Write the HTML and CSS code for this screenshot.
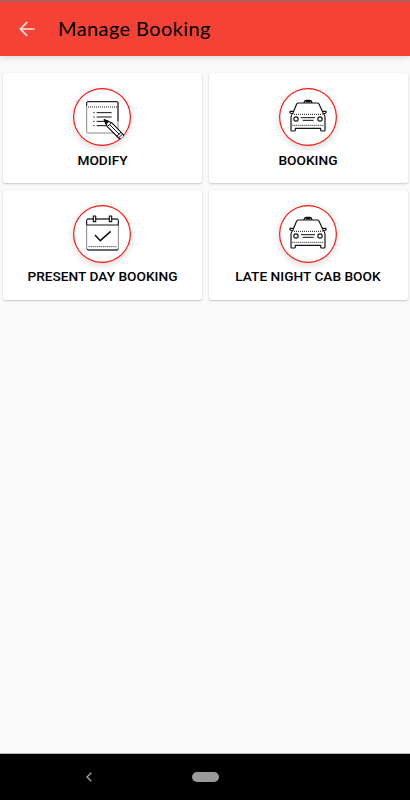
FILE: index.html
```html
<!DOCTYPE html>
<html lang="en">
<head>
<meta charset="utf-8">
<title>Manage Booking</title>
<link rel="stylesheet" href="styles.css">
</head>
<body>
<svg class="defs" width="0" height="0">
  <symbol id="car" viewBox="33 24 174 174">
    <path d="M75 98 86 72Q88 69 92 69H147Q151 69 153 72L165 98M108 68Q109 61 114 61H126Q131 61 132 68M113 65H128M77 94H66V99L75 102M163 94H174V99L165 102M76 99Q69 103 69 112V150Q69 153 72 153H79Q82 153 82 150V145H158V150Q158 153 161 153H168Q171 153 171 150V112Q171 103 164 99"/>
    <circle cx="84" cy="117" r="6.5"/><circle cx="156" cy="117" r="6.5"/>
    <path class="thin" d="M99 113H141M104 121H137"/>
    <path class="dots" d="M78 103H164M73 136H169"/>
  </symbol>
</svg>
<div class="screen">
  <header class="bar">
    <svg class="back" viewBox="0 0 16 16"><path d="M15.5 8H1.5M8.2 1.2 1.4 8l6.8 6.8"/></svg>
    <h1>Manage Booking</h1>
  </header>
  <main class="grid">
    <section class="card">
      <svg class="icon" viewBox="33 24 174 174">
        <rect class="gray" x="74" y="65" width="94" height="94" rx="3"/>
        <path class="edge" d="M74 77V68Q74 65 77 65H165Q168 65 168 68V124"/>
        <path class="dots" d="M78 81H167"/>
        <path class="thin" d="M104 98H149M104 111H149M104 124H133M104 137H138M94 98H98M94 111H98M94 124H98M94 137H98"/>
        <path class="fill" d="M127 119 149 128 184 164Q187 168 183 172L178 176Q174 178 170 174L136 140Z"/>
        <path class="edge" d="M137 139 149 128M142 133 172 163M164 169 177 157M169 174 182 162"/>
        <path class="tip" d="M127 119 139 124 132 132Z"/>
      </svg>
      <h2>MODIFY</h2>
    </section>
    <section class="card">
      <svg class="icon"><use href="#car"/></svg>
      <h2>BOOKING</h2>
    </section>
    <section class="card">
      <svg class="icon" viewBox="33 25 174 174">
        <rect class="gray" x="74" y="67" width="95" height="93" rx="4"/>
        <path class="edge" d="M74 85V71Q74 67 78 67H165Q169 67 169 71V85ZM75 156Q76 160 79 160H165Q168 160 169 156"/>
        <path class="fill" d="M94 58H101V75H94ZM142 58H149V75H142Z"/>
        <path class="check" d="M99 115 115 132 146 104"/>
        <path class="dots" d="M80 150H165"/>
      </svg>
      <h2>PRESENT DAY BOOKING</h2>
    </section>
    <section class="card">
      <svg class="icon"><use href="#car"/></svg>
      <h2>LATE NIGHT CAB BOOK</h2>
    </section>
  </main>
  <nav class="nav">
    <svg class="nav-back" viewBox="0 0 6 10"><path d="M5.3.7 1 5l4.3 4.3"/></svg>
    <span class="pill"></span>
  </nav>
</div>
</body>
</html>
```
FILE: styles.css
```css
* { box-sizing: border-box; }
body { margin: 0; font-family: Roboto, sans-serif; color: #000; }
.defs { display: block; height: 0; }
.screen { height: 800px; display: flex; flex-direction: column; background: #fafafa; overflow: hidden; }
.bar {
  height: 56px;
  flex: none;
  display: flex;
  align-items: center;
  padding: 0 0 0 19px;
  background: #f44336;
  border-top: 1px solid #757575;
  box-shadow: 0 2px 7px rgba(0, 0, 0, .12);
}
.back { width: 16px; height: 16px; fill: none; stroke: #ffe3e0; stroke-width: 1.7; }
h1 { margin: 0 0 1px 23px; font: 400 20px/24px Lato, sans-serif; letter-spacing: .4px; white-space: nowrap; }
.grid {
  flex: 1;
  display: grid;
  grid-template-columns: 199px 199px;
  grid-auto-rows: 110px;
  gap: 6.5px;
  align-content: start;
  padding: 17.3px 0 0 3px;
}
.card {
  display: flex;
  flex-direction: column;
  align-items: center;
  padding-top: 15px;
  background: #fff;
  border-radius: 2px;
  box-shadow: 0 1px 2px rgba(0, 0, 0, .2), 0 0 1px rgba(0, 0, 0, .12);
}
.icon {
  width: 58px;
  height: 58px;
  flex: none;
  margin-right: .5px;
  border-radius: 50%;
  background: #fff;
  box-shadow: inset 0 0 0 1.2px #fb1510, 0 2px 7px rgba(0, 0, 0, .17);
  fill: none;
  stroke: #111;
  stroke-width: 3.5;
  stroke-linejoin: round;
}
.gray { stroke: #888; stroke-width: 3; }
.edge { stroke-width: 3; }
.thin { stroke-width: 3; }
.dots { stroke-width: 3; stroke-dasharray: 3 3; }
.fill { fill: #fff; }
.tip { fill: #111; }
.check { stroke-width: 4.5; }
h2 { margin: 5.5px 0 0; font-size: 13.7px; font-weight: 500; line-height: 16px; white-space: nowrap; }
.nav {
  height: 47px;
  flex: none;
  display: flex;
  align-items: center;
  padding-left: 86px;
  background: #000;
  border-top: 1px solid #b5b5b5;
}
.nav-back { width: 6px; height: 10px; fill: none; stroke: #aaa; stroke-width: 1.3; }
.pill { width: 27px; height: 10px; margin-left: 100px; border-radius: 5px; background: #999; }
```
